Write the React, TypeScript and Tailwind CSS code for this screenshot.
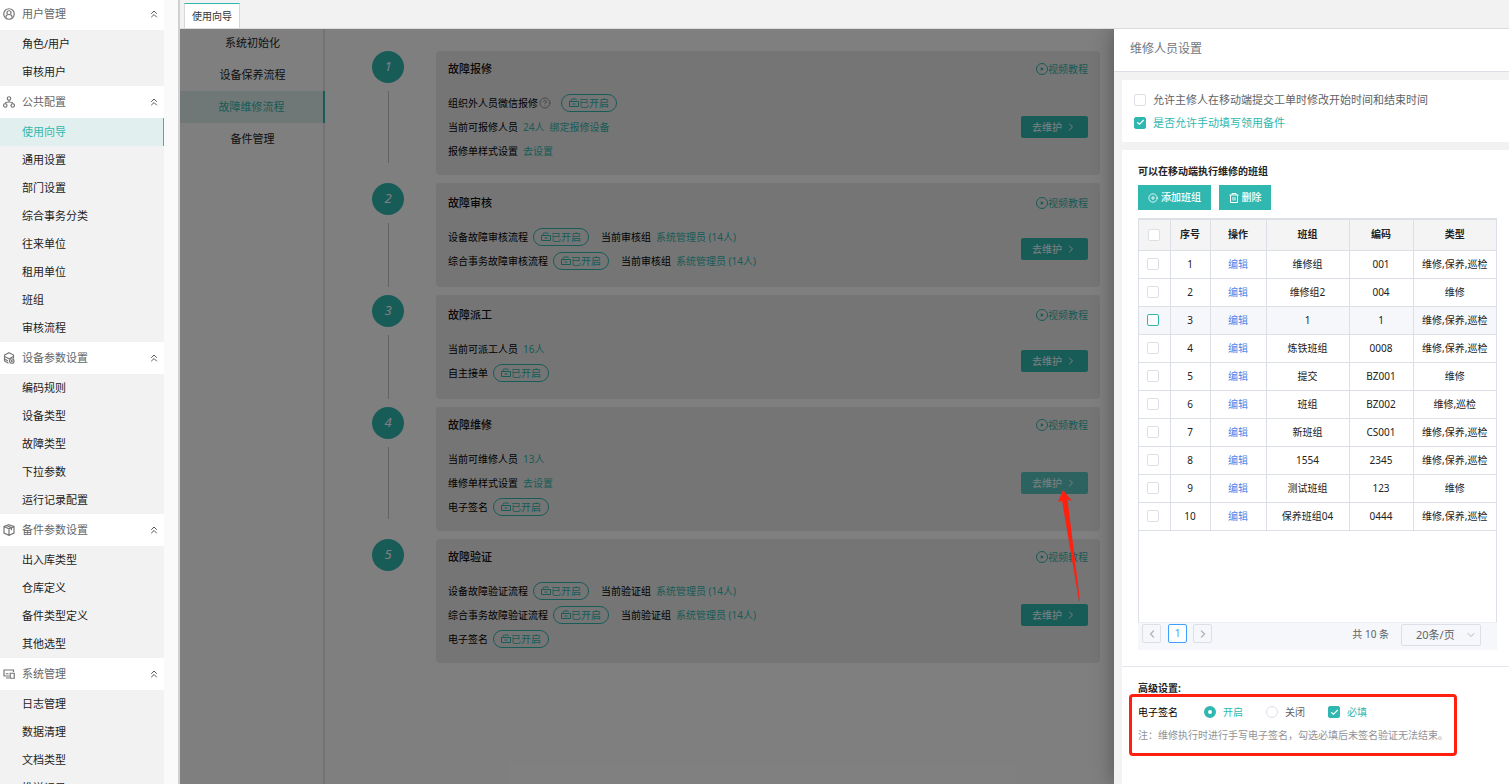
import type { ReactNode } from "react";
import clsx from "clsx";
import { Check, ChevronDown, ChevronLeft, ChevronRight, ChevronsUp, CirclePlus, CircleQuestionMark } from "lucide-react";

const menu = [
    { title: "用户管理", icon: "user", items: ["角色/用户", "审核用户"] },
    { title: "公共配置", icon: "tree", items: ["使用向导", "通用设置", "部门设置", "综合事务分类", "往来单位", "租用单位", "班组", "审核流程"] },
    { title: "设备参数设置", icon: "stack", items: ["编码规则", "设备类型", "故障类型", "下拉参数", "运行记录配置"] },
    { title: "备件参数设置", icon: "box", items: ["出入库类型", "仓库定义", "备件类型定义", "其他选型"] },
    { title: "系统管理", icon: "screen", items: ["日志管理", "数据清理", "文档类型", "推送记录"] },
];

const flows = ["系统初始化", "设备保养流程", "故障维修流程", "备件管理"];

const teams = [
    ["1", "维修组", "001", "维修,保养,巡检"],
    ["2", "维修组2", "004", "维修"],
    ["3", "1", "1", "维修,保养,巡检"],
    ["4", "炼铁班组", "0008", "维修,保养,巡检"],
    ["5", "提交", "BZ001", "维修"],
    ["6", "班组", "BZ002", "维修,巡检"],
    ["7", "新班组", "CS001", "维修,保养,巡检"],
    ["8", "1554", "2345", "维修,保养,巡检"],
    ["9", "测试班组", "123", "维修"],
    ["10", "保养班组04", "0444", "维修,保养,巡检"],
];

function MenuIcon({ name }: { name: string }) {
    return (
        <svg className="size-3 shrink-0" viewBox="0 0 24 24" fill="none" stroke="#777" strokeWidth="2.400">
            {name === "user" && (
                <>
                    <circle cx="12" cy="12" r="10.5" />
                    <circle cx="12" cy="9.5" r="4" />
                    <path d="M6 19v-1.5a4 4 0 0 1 3-3.8M18 19v-1.5a4 4 0 0 0-3-3.8" />
                </>
            )}
            {name === "tree" && (
                <>
                    <circle cx="12" cy="5" r="3.5" />
                    <circle cx="4.5" cy="19" r="3.5" />
                    <circle cx="19.5" cy="19" r="3.5" />
                    <path d="M12 8.5v4M4.5 15.5c0-3 2-3.5 7.5-3.5s7.5.5 7.5 3.5" />
                </>
            )}
            {name === "stack" && (
                <>
                    <path d="M12 1.5 21 6v3l-9 4.500L3 9V6z" />
                    <path d="M3 10v4l7 4M3 14v4l8 4.500M21 9v4" />
                    <circle cx="17.5" cy="18" r="4.5" />
                    <circle cx="17.5" cy="18" r="1" />
                </>
            )}
            {name === "box" && <path d="M12 1.5 22 5v13l-10 4.500L2 18V5zM2 5l10 4.500L22 5M12 9.500v13M7 3l10 4.500v5" />}
            {name === "screen" && (
                <>
                    <path d="M13 16H2V4h19v4M6 20h7M5.500 11.500H11" />
                    <path d="M14.500 10.500h8v10h-8z" />
                </>
            )}
        </svg>
    );
}

function PlayIcon() {
    return (
        <svg className="size-3" viewBox="0 0 24 24" fill="none" stroke="currentColor" strokeWidth="2">
            <circle cx="12" cy="12" r="11" />
            <path d="M9.500 8v8l6.500-4z" fill="currentColor" stroke="none" />
        </svg>
    );
}

function TrashIcon() {
    return (
        <svg className="size-[10px]" viewBox="0 0 20 20" fill="none" stroke="currentColor" strokeWidth="2">
            <path d="M1 4h18M6 4V1h8v3M3 4v15h14V4M8 8v7M12 8v7" />
        </svg>
    );
}

function Sidebar() {
    return (
        <nav className="w-[164px] shrink-0 overflow-hidden bg-[#f2f2f2] text-[11px]">
            {menu.map((group, i) => (
                <section key={group.title}>
                    <h2 className={clsx("flex items-center bg-white pl-[3px] pr-1 text-[#666]", i === 0 ? "h-[30px] pb-0.5" : "h-8")}>
                        <MenuIcon name={group.icon} />
                        <span className="ml-[7px] flex-1">{group.title}</span>
                        <ChevronsUp className="size-3 text-[#555]" strokeWidth={2} />
                    </h2>
                    <ul>
                        {group.items.map((item) => (
                            <li key={item}>
                                <a
                                    href="#"
                                    className={clsx(
                                        "flex h-7 items-center pl-[22px]",
                                        item === "使用向导" ? "border-r border-[#30b8b0] bg-[#e1f0ee] text-[#30b8b0]" : "text-[#222]"
                                    )}
                                >
                                    {item}
                                </a>
                            </li>
                        ))}
                    </ul>
                </section>
            ))}
        </nav>
    );
}

function CheckBox({ label, checked, className, hideLabel }: { label: string; checked?: boolean; className?: string; hideLabel?: boolean }) {
    return (
        <label className={clsx("inline-flex items-center gap-[7px]", checked ? "text-[#30b8b0]" : "text-[#606266]")}>
            <span className="grid size-3 shrink-0 place-items-center">
                <input
                    type="checkbox"
                    defaultChecked={checked}
                    aria-label={label}
                    className={clsx(
                        "peer col-start-1 row-start-1 size-3 appearance-none rounded-xs border bg-white checked:border-[#30b8b0] checked:bg-[#30b8b0]",
                        className ?? "border-[#dcdfe6]"
                    )}
                />
                <Check className="pointer-events-none col-start-1 row-start-1 hidden size-[9px] text-white peer-checked:block" strokeWidth={3} />
            </span>
            {!hideLabel && label}
        </label>
    );
}

function Radio({ label, checked }: { label: string; checked?: boolean }) {
    return (
        <label className={clsx("inline-flex items-center gap-[7px]", checked ? "text-[#30b8b0]" : "text-[#606266]")}>
            <input
                type="radio"
                name="signature"
                defaultChecked={checked}
                className="size-3 appearance-none rounded-full border border-[#dcdfe6] bg-white checked:border-4 checked:border-[#30b8b0]"
            />
            {label}
        </label>
    );
}

function Pill() {
    return (
        <button className="flex h-[18px] items-center rounded-full border border-[#30b8b0] px-[7px] text-[#30b8b0]">
            <svg className="size-[10px]" viewBox="0 0 20 20" fill="none" stroke="currentColor" strokeWidth="2">
                <path d="M1 7h18v10H1zM4 7V5q0-3 3-3h6q2 0 2 2M7 12h6" />
            </svg>
            <span>已开启</span>
        </button>
    );
}

function Row({ children }: { children: ReactNode }) {
    return <div className="flex h-6 items-center gap-[5px]">{children}</div>;
}

function Go({ children }: { children: ReactNode }) {
    return (
        <a href="#" className="text-[#30b8b0]">
            {children}
        </a>
    );
}

function Approval({ label, group }: { label: string; group: string }) {
    return (
        <Row>
            <span>{label}</span>
            <Pill />
            <span className="ml-[7px]">{group}</span>
            <Go>系统管理员 (14人)</Go>
        </Row>
    );
}

function Arrow() {
    return (
        <svg className="pointer-events-none absolute top-[17px] left-[36px] z-30 h-[112px] w-6" viewBox="0 0 24 112" fill="#ff2010">
            <path d="M6 1 15 12 10.500 10.500 23 112h-1L5 11.500 1 13z" />
        </svg>
    );
}

function Step({ no, title, tall, last, hover, children }: { no: number; title: string; tall?: boolean; last?: boolean; hover?: boolean; children: ReactNode }) {
    return (
        <li className="flex gap-8">
            <div className="flex w-8 shrink-0 flex-col items-center gap-2">
                <span className="flex size-8 items-center justify-center rounded-full bg-[#30b8b0] text-[13px] text-white italic">{no}</span>
                {!last && <span className={clsx("w-px bg-[#c0c4cc]", tall ? "h-18" : "h-16")} />}
            </div>
            <section className={clsx("flex flex-1 flex-col justify-center rounded bg-[#ebebeb] px-3 pb-0.5", tall ? "min-h-[124px]" : "min-h-[104px]")}>
                <div className="mb-[14px] flex h-4 items-center justify-between">
                    <h3 className="text-[11px] font-medium text-[#111]">{title}</h3>
                    <a href="#" className="flex items-center text-[#30b8b0]">
                        <PlayIcon />
                        视频教程
                    </a>
                </div>
                <div className="flex items-center justify-between">
                    <div>{children}</div>
                    <div className="relative">
                        <button
                            className={clsx(
                                "flex h-[22px] w-[67px] items-center justify-center gap-[3px] rounded-xs text-white",
                                hover ? "bg-[#59c6c0]" : "bg-[#30b8b0]"
                            )}
                        >
                            去维护
                            <ChevronRight className="size-3" strokeWidth={2} />
                        </button>
                        {hover && <Arrow />}
                    </div>
                </div>
            </section>
        </li>
    );
}

function Guide() {
    return (
        <main className="relative flex min-w-0 flex-1 overflow-hidden bg-white">
            <ul className="w-[145px] shrink-0 border-r-2 border-[#e4e4ee] text-center text-[11px]">
                {flows.map((flow, i) => (
                    <li key={flow}>
                        <a
                            href="#"
                            className={clsx(
                                "-mr-0.5 flex items-center justify-center",
                                i === 0 ? "h-[30px] pb-0.5" : "h-8",
                                i === 2 ? "border-r-2 border-[#30b8b0] bg-[#e1f0ee] text-[#30b8b0]" : "text-[#222]"
                            )}
                        >
                            {flow}
                        </a>
                    </li>
                ))}
            </ul>
            <ol className="flex flex-1 flex-col gap-2 pt-[22px] pr-[14px] pl-[47px] text-[10px] text-black">
                <Step no={1} title="故障报修" tall>
                    <Row>
                        <span>组织外人员微信报修</span>
                        <CircleQuestionMark className="-ml-1 size-3 text-[#909399]" strokeWidth={2} />
                        <span />
                        <Pill />
                    </Row>
                    <Row>
                        <span>当前可报修人员</span>
                        <Go>24人</Go>
                        <Go>绑定报修设备</Go>
                    </Row>
                    <Row>
                        <span>报修单样式设置</span>
                        <Go>去设置</Go>
                    </Row>
                </Step>
                <Step no={2} title="故障审核">
                    <Approval label="设备故障审核流程" group="当前审核组" />
                    <Approval label="综合事务故障审核流程" group="当前审核组" />
                </Step>
                <Step no={3} title="故障派工">
                    <Row>
                        <span>当前可派工人员</span>
                        <Go>16人</Go>
                    </Row>
                    <Row>
                        <span>自主接单</span>
                        <Pill />
                    </Row>
                </Step>
                <Step no={4} title="故障维修" tall hover>
                    <Row>
                        <span>当前可维修人员</span>
                        <Go>13人</Go>
                    </Row>
                    <Row>
                        <span>维修单样式设置</span>
                        <Go>去设置</Go>
                    </Row>
                    <Row>
                        <span>电子签名</span>
                        <Pill />
                    </Row>
                </Step>
                <Step no={5} title="故障验证" tall last>
                    <Approval label="设备故障验证流程" group="当前验证组" />
                    <Approval label="综合事务故障验证流程" group="当前验证组" />
                    <Row>
                        <span>电子签名</span>
                        <Pill />
                    </Row>
                </Step>
            </ol>
            <div className="absolute inset-0 z-10 bg-black/50" />
        </main>
    );
}

function TeamTable() {
    return (
        <div className="h-[404px] border border-t-2 border-b-0 border-[#dcdfe6]">
            <table className="w-full table-fixed border-collapse text-center">
                <colgroup>
                    <col className="w-[31px]" />
                    <col className="w-10" />
                    <col className="w-14" />
                    <col />
                    <col className="w-16" />
                    <col className="w-[83px]" />
                </colgroup>
                <thead>
                    <tr className="h-[30px] border-b border-[#dcdfe6] bg-[#f4f4f5] text-[#222]">
                        <th className="border-r border-[#dcdfe6] p-0">
                            <span className="flex justify-center">
                                <CheckBox label="全选" hideLabel />
                            </span>
                        </th>
                        {["序号", "操作", "班组", "编码", "类型"].map((head) => (
                            <th key={head} className="border-r border-[#dcdfe6] p-0 font-bold last:border-r-0">
                                {head}
                            </th>
                        ))}
                    </tr>
                </thead>
                <tbody>
                    {teams.map(([no, name, code, type]) => (
                        <tr key={no} className={clsx("h-7 border-b border-[#dcdfe6] text-[#222]", no === "3" && "bg-[#f5f7fa]")}>
                            <td className="border-r border-[#dcdfe6] p-0">
                                <span className="flex justify-center pr-0.5">
                                    <CheckBox label={"选择" + name} hideLabel className={no === "3" ? "border-[#30b8b0]" : undefined} />
                                </span>
                            </td>
                            <td className="border-r border-[#dcdfe6] p-0">{no}</td>
                            <td className="border-r border-[#dcdfe6] p-0">
                                <a href="#" className="text-[#4a86e8]">
                                    编辑
                                </a>
                            </td>
                            <td className="border-r border-[#dcdfe6] p-0">{name}</td>
                            <td className="border-r border-[#dcdfe6] p-0">{code}</td>
                            <td className="p-0 whitespace-nowrap">{type}</td>
                        </tr>
                    ))}
                </tbody>
            </table>
        </div>
    );
}

function Pagination() {
    return (
        <div className="flex h-7 items-start border-t border-[#ebeef5] bg-[#f5f7fa] pt-px pr-4 pl-1 text-[#606266]">
            <button aria-label="上一页" className="flex size-[19px] items-center justify-center rounded-xs border border-[#dcdfe6] text-[#b4b8c0]">
                <ChevronLeft className="size-3" strokeWidth={3} />
            </button>
            <button className="ml-[7px] flex size-[19px] items-center justify-center rounded-xs border border-[#409eff] bg-white text-[#409eff]">1</button>
            <button aria-label="下一页" className="ml-[6px] flex size-[19px] items-center justify-center rounded-xs border border-[#dcdfe6] text-[#b4b8c0]">
                <ChevronRight className="size-3" strokeWidth={3} />
            </button>
            <span className="ml-auto leading-[20px]">共 10 条</span>
            <span className="ml-3 grid items-center">
                <select aria-label="每页条数" className="col-start-1 row-start-1 h-[22px] w-20 appearance-none rounded-xs border border-[#dcdfe6] pl-[14px] text-[11px]">
                    <option>20条/页</option>
                </select>
                <ChevronDown className="pointer-events-none col-start-1 row-start-1 mr-1 size-3 justify-self-end text-[#b4b8c0]" strokeWidth={2} />
            </span>
        </div>
    );
}

function Drawer() {
    return (
        <aside className="relative z-20 flex w-[395px] shrink-0 flex-col bg-[#f2f2f2] text-[10px] shadow-[0_0_20px_rgba(0,0,0,0.35)]">
            <h2 className="h-[43px] shrink-0 border-b border-[#dcdfe6] bg-white pl-4 text-xs leading-[39px] text-[#72767b]">维修人员设置</h2>
            <div className="flex flex-1 flex-col gap-2 pt-2 pl-2">
                <section className="flex h-[62px] flex-col justify-center gap-[7px] bg-white pl-3 text-[11px] leading-4">
                    <CheckBox label="允许主修人在移动端提交工单时修改开始时间和结束时间" />
                    <CheckBox label="是否允许手动填写领用备件" checked />
                </section>
                <section className="flex-1 bg-white">
                    <div className="border-b border-[#e4e7ed] px-4 pt-[13px] pr-3 pb-4">
                        <h3 className="leading-4 font-bold text-[#222]">可以在移动端执行维修的班组</h3>
                        <div className="mt-[6px] mb-2 flex gap-2 font-medium text-white">
                            <button className="flex h-[25px] w-[73px] items-center justify-center gap-[3px] bg-[#30b8b0]">
                                <CirclePlus className="size-[10px]" strokeWidth={2} />
                                添加班组
                            </button>
                            <button className="flex h-[25px] w-[52px] items-center justify-center gap-[3px] bg-[#30b8b0]">
                                <TrashIcon />
                                删除
                            </button>
                        </div>
                        <TeamTable />
                        <Pagination />
                    </div>
                    <div className="relative px-4 pt-[13px]">
                        <h3 className="leading-4 font-bold text-[#222]">高级设置:</h3>
                        <div className="mt-2 flex h-4 items-center">
                            <span className="w-[66px] text-black">电子签名</span>
                            <div className="flex gap-[23px]">
                                <Radio label="开启" checked />
                                <Radio label="关闭" />
                                <CheckBox label="必填" checked />
                            </div>
                        </div>
                        <p className="mt-[7px] leading-4 text-[#909399]">注：维修执行时进行手写电子签名，勾选必填后未签名验证无法结束。</p>
                        <div className="pointer-events-none absolute top-[27px] left-[7px] h-[62px] w-[328px] rounded border-3 border-[#ff2010]" />
                    </div>
                </section>
            </div>
        </aside>
    );
}

export default function App() {
    return (
        <div className="flex h-screen overflow-hidden bg-[#fafafa] font-['Noto_Sans','Noto_Sans_CJK_SC',sans-serif]">
            <Sidebar />
            <div className="ml-[14px] flex min-w-0 flex-1 flex-col border-l-2 border-[#d0d0d0]">
                <header className="flex h-[29px] shrink-0 items-end border-b border-[#dcdcdc] bg-[#f2f2f2] pl-1">
                    <button className="h-[25px] w-14 border-x border-t border-x-[#d8d8d8] border-t-[#30b8b0] bg-white text-[10px] text-[#333]">使用向导</button>
                </header>
                <div className="flex min-h-0 flex-1 overflow-hidden">
                    <Guide />
                    <Drawer />
                </div>
            </div>
        </div>
    );
}
